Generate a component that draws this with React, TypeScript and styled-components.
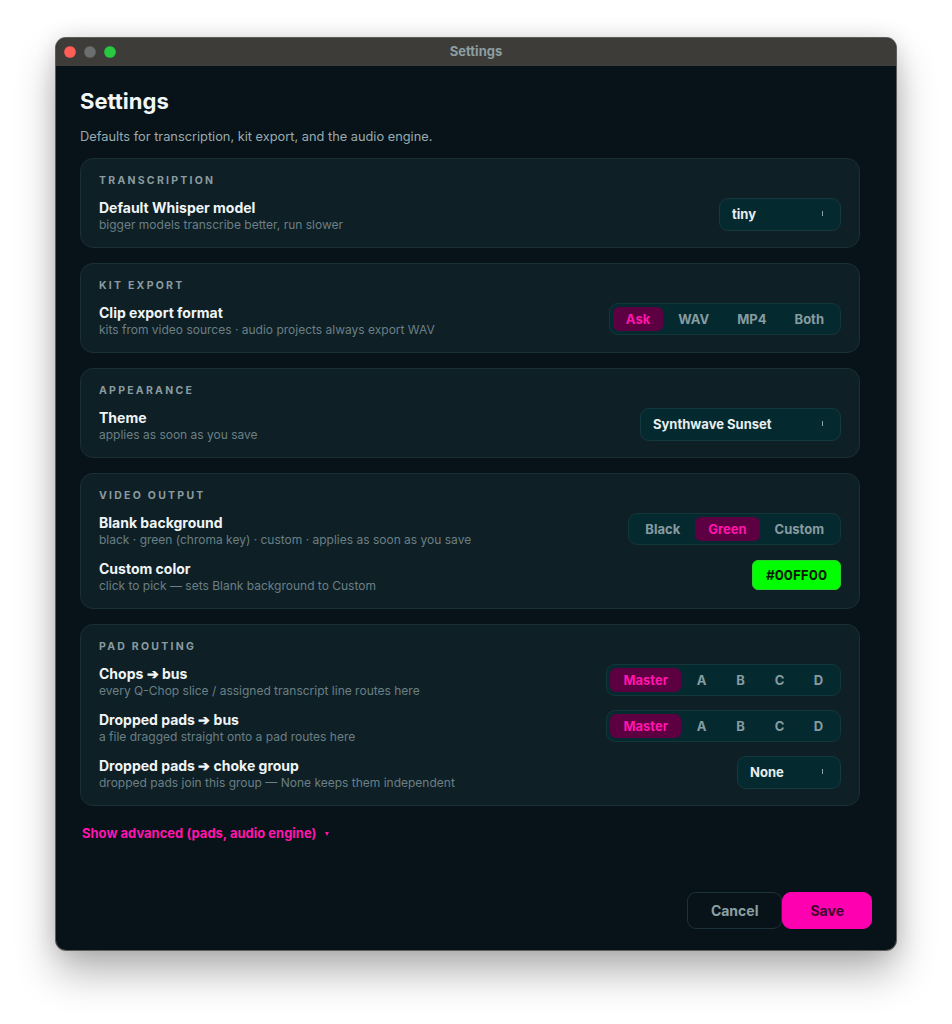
import React, { useState } from 'react';
import { styled, createGlobalStyle } from 'styled-components';

const GlobalStyle = createGlobalStyle`
  html, body {
    margin: 0;
    padding: 0;
    background: #ffffff;
  }
  * {
    box-sizing: border-box;
  }
  body {
    font-family: Inter, "Noto Sans", "Liberation Sans", sans-serif;
    -webkit-font-smoothing: antialiased;
  }
`;

const Stage = styled.div`
  width: 952px;
  height: 1024px;
  padding: 38px 0 0 56px;
`;

const Window = styled.div`
  width: 840px;
  height: 912px;
  border-radius: 10px;
  overflow: hidden;
  display: flex;
  flex-direction: column;
  background: #071318;
  box-shadow: 0 0 0 1px #5d5e5b, 0 22px 40px rgba(0, 0, 0, 0.3), 0 0 22px rgba(0, 0, 0, 0.12);
`;

const TitleBar = styled.div`
  height: 28px;
  flex-shrink: 0;
  background: #3d3c38;
  position: relative;
  display: flex;
  align-items: center;
  justify-content: center;
`;

const Lights = styled.div`
  position: absolute;
  left: 8px;
  top: 8px;
  display: flex;
  gap: 8px;
`;

const Light = styled.span<{ $color: string }>`
  width: 12px;
  height: 12px;
  border-radius: 50%;
  background: ${(p) => p.$color};
  box-shadow: inset 0 0 0 0.5px rgba(0, 0, 0, 0.2);
`;

const WindowTitle = styled.span`
  font-size: 13px;
  font-weight: 700;
  color: #8c9ea1;
  margin-top: -2px;
`;

const Body = styled.div`
  flex: 1;
  padding: 21px 36px 0 24px;
  display: flex;
  flex-direction: column;
`;

const Heading = styled.h1`
  margin: 0;
  font-size: 22px;
  line-height: 28px;
  font-weight: 700;
  color: #f2f6f7;
`;

const Subtitle = styled.p`
  margin: 13px 0 12px;
  font-size: 12.8px;
  line-height: 18px;
  color: #9aabb0;
`;

const Cards = styled.div`
  display: flex;
  flex-direction: column;
  gap: 15px;
`;

const Card = styled.section`
  background: #0e1f26;
  border: 1px solid #1a2f36;
  border-radius: 13px;
  padding: 14px 18px 16px;
  display: flex;
  flex-direction: column;
  gap: 12px;
`;

const SectionLabel = styled.h3`
  margin: 1px 0 -3px;
  font-size: 10.5px;
  line-height: 14px;
  font-weight: 700;
  letter-spacing: 2.25px;
  text-transform: uppercase;
  color: #8a9ba0;
`;

const Row = styled.div`
  display: flex;
  align-items: flex-start;
  justify-content: space-between;
  height: 34px;
  & > *:last-child {
    align-self: center;
  }
`;

const RowText = styled.div`
  display: flex;
  flex-direction: column;
  padding-top: 2px;
`;

const RowTitle = styled.div`
  font-size: 14px;
  line-height: 18px;
  font-weight: 700;
  color: #f0f4f5;
`;

const RowDesc = styled.div`
  font-size: 12px;
  line-height: 16px;
  color: #6b7f84;
`;

const Select = styled.div<{ $width: number }>`
  width: ${(p) => p.$width}px;
  height: 33px;
  border-radius: 9px;
  background: #042a30;
  border: 1px solid #15393e;
  padding: 0 12px;
  display: flex;
  align-items: center;
  position: relative;
  font-size: 13px;
  font-weight: 700;
  color: #e8eef0;
`;

const SelectMark = styled.span`
  position: absolute;
  right: 17px;
  top: 12px;
  width: 1px;
  height: 5px;
  background: #8fa3a6;
`;

const Segmented = styled.div`
  display: flex;
  gap: 2px;
  padding: 3px;
  border-radius: 9px;
  background: #042a30;
  border: 1px solid #13363b;
`;

const Segment = styled.button<{ $active: boolean }>`
  height: 24px;
  min-width: 37px;
  padding: 0 13px;
  border: none;
  border-radius: 6px;
  font-family: inherit;
  font-size: 13px;
  font-weight: 700;
  cursor: pointer;
  background: ${(p) => (p.$active ? '#5c0042' : 'transparent')};
  color: ${(p) => (p.$active ? '#ff14ae' : '#879ba0')};
`;

const Swatch = styled.button<{ $color: string }>`
  width: 89px;
  height: 30px;
  border-radius: 6px;
  border: 1px solid #2bd42b;
  background: ${(p) => p.$color};
  font-family: inherit;
  font-size: 13.5px;
  font-weight: 700;
  color: #0a1a0a;
  cursor: pointer;
`;

const Advanced = styled.button`
  align-self: flex-start;
  margin: 18px 0 0 2px;
  padding: 0;
  border: none;
  background: none;
  font-family: inherit;
  font-size: 13px;
  line-height: 18px;
  font-weight: 700;
  color: #ff14ae;
  cursor: pointer;
  display: flex;
  align-items: center;
  gap: 9px;
`;

const Caret = styled.span`
  width: 0;
  height: 0;
  margin-top: 2px;
  border-left: 2.5px solid transparent;
  border-right: 2.5px solid transparent;
  border-top: 4px solid #ff14ae;
`;

const Footer = styled.div`
  display: flex;
  justify-content: flex-end;
  padding: 0 24px 21px;
`;

const Button = styled.button<{ $primary?: boolean }>`
  height: 37px;
  padding: 0 ${(p) => (p.$primary ? 27 : 23)}px;
  border-radius: 9px;
  font-family: inherit;
  font-size: 14px;
  font-weight: 700;
  cursor: pointer;
  border: 1px solid ${(p) => (p.$primary ? '#ff00b0' : '#1c3139')};
  background: ${(p) => (p.$primary ? '#ff00b0' : 'transparent')};
  color: ${(p) => (p.$primary ? '#3d0a2c' : '#8ca0a4')};
`;

interface SegProps {
  options: string[];
  value: string;
  onChange: (v: string) => void;
}

function SegmentedControl({ options, value, onChange }: SegProps) {
  return (
    <Segmented>
      {options.map((o) => (
        <Segment key={o} $active={o === value} onClick={() => onChange(o)}>
          {o}
        </Segment>
      ))}
    </Segmented>
  );
}

function SettingRow({ title, desc, children }: { title: string; desc: string; children: React.ReactNode }) {
  return (
    <Row>
      <RowText>
        <RowTitle>{title}</RowTitle>
        <RowDesc>{desc}</RowDesc>
      </RowText>
      {children}
    </Row>
  );
}

export default function App() {
  const [format, setFormat] = useState('Ask');
  const [bg, setBg] = useState('Green');
  const [chopsBus, setChopsBus] = useState('Master');
  const [dropBus, setDropBus] = useState('Master');
  const buses = ['Master', 'A', 'B', 'C', 'D'];

  return (
    <>
      <GlobalStyle />
      <Stage>
        <Window>
          <TitleBar>
            <Lights>
              <Light $color="#ff5f57" />
              <Light $color="#6b6e6e" />
              <Light $color="#28c840" />
            </Lights>
            <WindowTitle>Settings</WindowTitle>
          </TitleBar>
          <Body>
            <Heading>Settings</Heading>
            <Subtitle>Defaults for transcription, kit export, and the audio engine.</Subtitle>
            <Cards>
              <Card>
                <SectionLabel>Transcription</SectionLabel>
                <SettingRow title="Default Whisper model" desc="bigger models transcribe better, run slower">
                  <Select $width={122}>
                    tiny
                    <SelectMark />
                  </Select>
                </SettingRow>
              </Card>
              <Card>
                <SectionLabel>Kit Export</SectionLabel>
                <SettingRow
                  title="Clip export format"
                  desc="kits from video sources · audio projects always export WAV"
                >
                  <SegmentedControl options={['Ask', 'WAV', 'MP4', 'Both']} value={format} onChange={setFormat} />
                </SettingRow>
              </Card>
              <Card>
                <SectionLabel>Appearance</SectionLabel>
                <SettingRow title="Theme" desc="applies as soon as you save">
                  <Select $width={201}>
                    Synthwave Sunset
                    <SelectMark />
                  </Select>
                </SettingRow>
              </Card>
              <Card>
                <SectionLabel>Video Output</SectionLabel>
                <SettingRow
                  title="Blank background"
                  desc="black · green (chroma key) · custom · applies as soon as you save"
                >
                  <SegmentedControl options={['Black', 'Green', 'Custom']} value={bg} onChange={setBg} />
                </SettingRow>
                <SettingRow title="Custom color" desc="click to pick — sets Blank background to Custom">
                  <Swatch $color="#00ff00">#00FF00</Swatch>
                </SettingRow>
              </Card>
              <Card>
                <SectionLabel>Pad Routing</SectionLabel>
                <SettingRow title="Chops ➔ bus" desc="every Q-Chop slice / assigned transcript line routes here">
                  <SegmentedControl options={buses} value={chopsBus} onChange={setChopsBus} />
                </SettingRow>
                <SettingRow title="Dropped pads ➔ bus" desc="a file dragged straight onto a pad routes here">
                  <SegmentedControl options={buses} value={dropBus} onChange={setDropBus} />
                </SettingRow>
                <SettingRow
                  title="Dropped pads ➔ choke group"
                  desc="dropped pads join this group — None keeps them independent"
                >
                  <Select $width={104}>
                    None
                    <SelectMark />
                  </Select>
                </SettingRow>
              </Card>
            </Cards>
            <Advanced>
              Show advanced (pads, audio engine)
              <Caret />
            </Advanced>
          </Body>
          <Footer>
            <Button>Cancel</Button>
            <Button $primary>Save</Button>
          </Footer>
        </Window>
      </Stage>
    </>
  );
}
